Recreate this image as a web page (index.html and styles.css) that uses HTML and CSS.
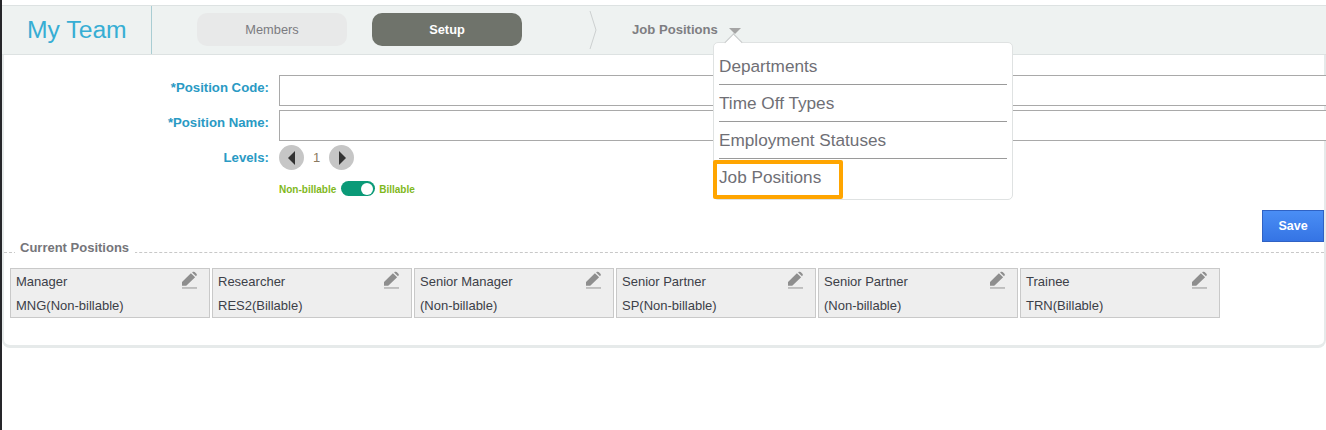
FILE: index.html
```html
<!DOCTYPE html>
<html lang="en">
<head>
<meta charset="utf-8">
<title>My Team</title>
<link rel="stylesheet" href="styles.css">
</head>
<body>
<div class="page">
  <div class="panel">
    <header class="topbar">
      <h1 class="title">My Team</h1>
      <nav class="tabs">
        <a class="tab">Members</a>
        <a class="tab tab-active">Setup</a>
      </nav>
      <svg class="crumb" width="8" height="38" viewBox="0 0 8 38"><path d="M1 0 L7 19 L1 38" fill="none" stroke="#ccd0d0" stroke-width="1"/></svg>
      <div class="picker">
        <span class="picker-label">Job Positions</span>
        <span class="caret"></span>
        <div class="menu">
          <span class="menu-tip"></span>
          <div class="menu-item">Departments</div>
          <div class="menu-item">Time Off Types</div>
          <div class="menu-item">Employment Statuses</div>
          <div class="menu-item menu-last">Job Positions</div>
          <div class="highlight"></div>
        </div>
      </div>
    </header>
    <form class="form">
      <div class="row row-input"><label class="label">*Position Code:</label><div class="input"></div></div>
      <div class="row row-input"><label class="label">*Position Name:</label><div class="input"></div></div>
      <div class="row row-levels">
        <label class="label">Levels:</label>
        <span class="round"><svg width="10" height="14" viewBox="0 0 10 14"><path d="M8 0 V14 L1 7 Z" fill="#333"/></svg></span>
        <span class="level">1</span>
        <span class="round"><svg width="10" height="14" viewBox="0 0 10 14"><path d="M2 0 V14 L9 7 Z" fill="#333"/></svg></span>
      </div>
      <div class="row-toggle">
        <span class="bill">Non-billable</span>
        <span class="toggle"><span class="knob"></span></span>
        <span class="bill">Billable</span>
      </div>
      <div class="actions"><button type="button" class="save">Save</button></div>
    </form>
    <section class="current">
      <div class="legend"><span class="legend-text">Current Positions</span></div>
      <div class="cards">
        <div class="card"><div class="card-top"><span>Manager</span><svg class="pencil" viewBox="0 0 16 18"><path d="M0 15 V11 L9.5 1.8 L14 6 L4.5 15 Z M10.8 .9 L11.6 .3 Q12.6 -.2 13.5 .5 L15.4 2.3 Q16.2 3.3 15.5 4.3 L14.9 5 Z" fill="#8e8e8e"/><path d="M0 17.5 H16" stroke="#8e8e8e"/></svg></div><div>MNG(Non-billable)</div></div>
        <div class="card"><div class="card-top"><span>Researcher</span><svg class="pencil" viewBox="0 0 16 18"><path d="M0 15 V11 L9.5 1.8 L14 6 L4.5 15 Z M10.8 .9 L11.6 .3 Q12.6 -.2 13.5 .5 L15.4 2.3 Q16.2 3.3 15.5 4.3 L14.9 5 Z" fill="#8e8e8e"/><path d="M0 17.5 H16" stroke="#8e8e8e"/></svg></div><div>RES2(Billable)</div></div>
        <div class="card"><div class="card-top"><span>Senior Manager</span><svg class="pencil" viewBox="0 0 16 18"><path d="M0 15 V11 L9.5 1.8 L14 6 L4.5 15 Z M10.8 .9 L11.6 .3 Q12.6 -.2 13.5 .5 L15.4 2.3 Q16.2 3.3 15.5 4.3 L14.9 5 Z" fill="#8e8e8e"/><path d="M0 17.5 H16" stroke="#8e8e8e"/></svg></div><div>(Non-billable)</div></div>
        <div class="card"><div class="card-top"><span>Senior Partner</span><svg class="pencil" viewBox="0 0 16 18"><path d="M0 15 V11 L9.5 1.8 L14 6 L4.5 15 Z M10.8 .9 L11.6 .3 Q12.6 -.2 13.5 .5 L15.4 2.3 Q16.2 3.3 15.5 4.3 L14.9 5 Z" fill="#8e8e8e"/><path d="M0 17.5 H16" stroke="#8e8e8e"/></svg></div><div>SP(Non-billable)</div></div>
        <div class="card"><div class="card-top"><span>Senior Partner</span><svg class="pencil" viewBox="0 0 16 18"><path d="M0 15 V11 L9.5 1.8 L14 6 L4.5 15 Z M10.8 .9 L11.6 .3 Q12.6 -.2 13.5 .5 L15.4 2.3 Q16.2 3.3 15.5 4.3 L14.9 5 Z" fill="#8e8e8e"/><path d="M0 17.5 H16" stroke="#8e8e8e"/></svg></div><div>(Non-billable)</div></div>
        <div class="card"><div class="card-top"><span>Trainee</span><svg class="pencil" viewBox="0 0 16 18"><path d="M0 15 V11 L9.5 1.8 L14 6 L4.5 15 Z M10.8 .9 L11.6 .3 Q12.6 -.2 13.5 .5 L15.4 2.3 Q16.2 3.3 15.5 4.3 L14.9 5 Z" fill="#8e8e8e"/><path d="M0 17.5 H16" stroke="#8e8e8e"/></svg></div><div>TRN(Billable)</div></div>
      </div>
    </section>
  </div>
</div>
</body>
</html>
```
FILE: styles.css
```css
* { box-sizing: border-box; }
html, body { margin: 0; padding: 0; background: #fff; }
body { font-family: "Liberation Sans", Arial, sans-serif; }
.page {
  position: relative;
  width: 1326px;
  height: 430px;
  overflow: hidden;
  border-left: 2px solid #26262a;
  padding-top: 5px;
}
.page::before {
  content: "";
  position: absolute;
  left: -2px;
  top: 72px;
  width: 2px;
  height: 2px;
  background: #999;
}
.panel {
  height: 343px;
  border-right: 2px solid #e6eaea;
  border-bottom: 3px solid #e6eaea;
  border-left: 2px solid #e6eaea;
  border-bottom-left-radius: 8px;
  border-bottom-right-radius: 8px;
}
.topbar {
  height: 50px;
  margin: 0 -2px;
  background: #eef2f1;
  border-top: 1px solid #dde2e2;
  border-bottom: 1px solid #dde2e2;
  display: flex;
  align-items: center;
}
.title {
  width: 150px;
  height: 100%;
  margin: 0;
  padding-left: 25px;
  border-right: 1px solid #a9cdd3;
  font-size: 24.7px;
  font-weight: 400;
  line-height: 48px;
  color: #37aed4;
}
.tabs { display: flex; gap: 25px; margin-left: 45px; margin-top: -1px; }
.tab {
  width: 150px;
  height: 33px;
  border-radius: 10px;
  background: #e8e9e9;
  color: #7b7b80;
  font-size: 12.8px;
  line-height: 33px;
  text-align: center;
}
.tab-active { background: #6f736b; color: #fff; font-weight: 700; }
.crumb { margin-left: 67px; margin-top: -1px; }
.picker { position: relative; display: flex; align-items: center; margin-left: 35px; margin-top: -1px; }
.picker-label { font-size: 13.1px; font-weight: 700; color: #7e7e82; }
.caret {
  width: 0;
  height: 0;
  margin-left: 11px;
  margin-top: 3px;
  border-left: 6px solid transparent;
  border-right: 6px solid transparent;
  border-top: 6px solid #a5a5a5;
}
.menu {
  position: absolute;
  left: 81px;
  top: 20px;
  width: 300px;
  height: 158px;
  padding: 5px 5px 0;
  background: #fff;
  border: 1px solid #dfe2e2;
  border-radius: 5px;
  z-index: 5;
}
.menu-tip {
  position: absolute;
  left: 13px;
  top: -7px;
  width: 13px;
  height: 13px;
  background: #fff;
  border-top: 1px solid #c4c7c7;
  border-left: 1px solid #c4c7c7;
  transform: rotate(45deg);
}
.menu-item {
  position: relative;
  height: 37px;
  border-bottom: 1px solid #9a9a9a;
  font-size: 17.2px;
  line-height: 36px;
  color: #6f6f75;
}
.menu-last { border-bottom: 0; }
.highlight {
  position: absolute;
  left: -1px;
  top: 117px;
  width: 130px;
  height: 39px;
  border: 4px solid #ffa500;
  border-radius: 2px;
}
.form { padding-top: 20px; }
.row { display: flex; align-items: center; }
.row-input { height: 31px; margin-bottom: 4px; }
.label {
  width: 265px;
  margin-right: 10px;
  text-align: right;
  font-size: 13.2px;
  font-weight: 700;
  color: #2a9ac4;
}
.row-input .label { padding-bottom: 6px; }
.input { flex: 1; height: 31px; margin-right: -2px; border: 1px solid #a9a9a9; border-right: 0; background: #fff; }
.row-levels { height: 25px; }
.round {
  width: 25px;
  height: 25px;
  border-radius: 50%;
  background: #c6c6c6;
  display: flex;
  align-items: center;
  justify-content: center;
}
.level { width: 25px; text-align: center; font-size: 13px; color: #8a7a60; }
.row-toggle {
  display: flex;
  align-items: center;
  gap: 4px;
  height: 15px;
  margin-top: 11px;
  padding-left: 275px;
}
.bill { font-size: 10px; font-weight: 700; color: #7fb81c; position: relative; top: 1px; }
.toggle {
  display: flex;
  align-items: center;
  justify-content: flex-end;
  width: 34px;
  height: 15px;
  margin-left: 1px;
  padding-right: 2px;
  border-radius: 8px;
  background: #0b9a78;
}
.knob { width: 12px; height: 12px; border-radius: 50%; background: #fff; }
.actions { display: flex; justify-content: flex-end; margin-top: 14px; }
.save {
  width: 62px;
  height: 32px;
  border: 1px solid #2f62c4;
  background: linear-gradient(#4a8ef5, #3574e4);
  color: #fff;
  font: 700 12.5px "Liberation Sans", Arial, sans-serif;
}
.current { margin-top: 10px; }
.legend {
  height: 1px;
  border-top: 1px dashed #c8c8c8;
  margin-top: 10px;
}
.legend-text {
  display: inline-block;
  position: relative;
  top: -15px;
  margin-left: 11px;
  padding: 0 6px 0 5px;
  background: #fff;
  font-size: 13px;
  font-weight: 700;
  color: #75757a;
}
.cards { display: flex; gap: 2px; padding: 15px 0 0 6px; }
.card {
  width: 200px;
  height: 50px;
  padding: 4px 5px;
  background: #eeeeee;
  border: 1px solid #c9c9c9;
  font-size: 13px;
  line-height: 16px;
  color: #3c4048;
}
.card-top { display: flex; justify-content: space-between; height: 25px; padding-top: 1px; }
.pencil { width: 15px; height: 18px; margin: -3px 7px 0 0; }
```
